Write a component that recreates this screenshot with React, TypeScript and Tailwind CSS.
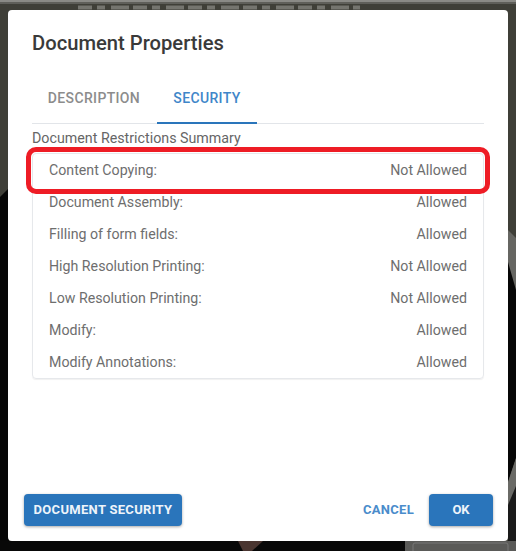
const rows = [
  ["Content Copying:", "Not Allowed"],
  ["Document Assembly:", "Allowed"],
  ["Filling of form fields:", "Allowed"],
  ["High Resolution Printing:", "Not Allowed"],
  ["Low Resolution Printing:", "Not Allowed"],
  ["Modify:", "Allowed"],
  ["Modify Annotations:", "Allowed"],
];

function Backdrop() {
  return (
    <svg className="absolute inset-0" width="516" height="551" viewBox="0 0 516 551">
      <rect width="516" height="551" fill="#3f3f38" />
      <rect width="516" height="2" fill="#8a8a86" />
      <rect y="2" width="516" height="2" fill="#5f5f5a" />
      <line x1="78" y1="7.5" x2="360" y2="7.5" stroke="#75756f" strokeWidth="4" strokeDasharray="14 5 8 6 18 4" />
      <path d="M0 197 L9 188 V551 H0 Z" fill="#070707" />
      <path d="M508 230 L516 238 V300 L508 300 Z" fill="#666662" />
      <path d="M508 262 L516 290 V458 L508 482 Z" fill="#070707" />
      <path d="M508 482 L516 458 V541 H508 Z" fill="#6a6a66" />
      <path d="M508 505 L516 486 V541 H508 Z" fill="#1a1a1a" />
      <rect y="541" width="516" height="10" fill="#080808" />
      <path d="M238 541 L263 541 L252 551 L243 551 Z" fill="#4a3530" />
      <rect x="405" y="541" width="111" height="10" fill="#5a5a58" />
      <rect x="413" y="543" width="95" height="10" rx="2" fill="none" stroke="#777" />
    </svg>
  );
}

export default function App() {
  return (
    <div className="relative h-[551px] w-[516px] overflow-hidden pt-[10px] pl-[8px] font-['Roboto',sans-serif]">
      <Backdrop />

      <div className="relative flex h-[531px] w-[500px] flex-col rounded bg-white px-4 pb-[15px]">
        <h2 className="ml-2 mt-[21px] text-[20.2px] font-medium leading-6 text-[#3a3a3a]">
          Document Properties
        </h2>

        <div className="mx-2 mt-[23px] flex h-[46px] border-b border-[#e2e5e9] text-[14px] font-medium tracking-[0.35px]">
          <div className="w-[125px] pr-[1px] pt-3 text-center leading-4 text-[#8c8c8c]">
            DESCRIPTION
          </div>
          <div className="h-[46px] w-[100px] border-b-2 border-[#2a75bb] pt-3 text-center leading-4 text-[#3f86c9]">
            SECURITY
          </div>
        </div>

        <p className="ml-2 mt-[6px] text-[14.25px] leading-4 text-[#666666]">
          Document Restrictions Summary
        </p>

        <div className="mx-2 mt-[7px] rounded border border-[#e6e8eb] shadow-[0_1px_1px_rgba(0,0,0,0.06)]">
          {rows.map(([name, value]) => (
            <div
              key={name}
              className="flex h-8 items-center justify-between px-4 pt-[2px] text-[14.2px] text-[#6e6e6e]"
            >
              <span>{name}</span>
              <span>{value}</span>
            </div>
          ))}
        </div>

        <div className="mt-auto -mr-[1px] flex items-center justify-between">
          <button className="h-[32px] w-[158px] rounded bg-[#2a75bb] text-[13px] font-bold tracking-[0.3px] text-[#eef4fa] shadow-[0_1px_3px_rgba(0,0,0,0.35)]">
            DOCUMENT SECURITY
          </button>
          <div className="flex items-center gap-[15px]">
            <button className="text-[13px] font-bold tracking-[0.3px] text-[#4a8ccb]">
              CANCEL
            </button>
            <button className="h-[32px] w-[64px] rounded bg-[#2a75bb] text-[13px] font-bold text-[#eef4fa] shadow-[0_1px_3px_rgba(0,0,0,0.35)]">
              OK
            </button>
          </div>
        </div>
      </div>

      {/* red highlight drawn over the first row */}
      <div className="absolute left-[26px] top-[147px] h-[47px] w-[464px] rounded-[10px] border-[5px] border-[#ee1c25]" />
    </div>
  );
}
